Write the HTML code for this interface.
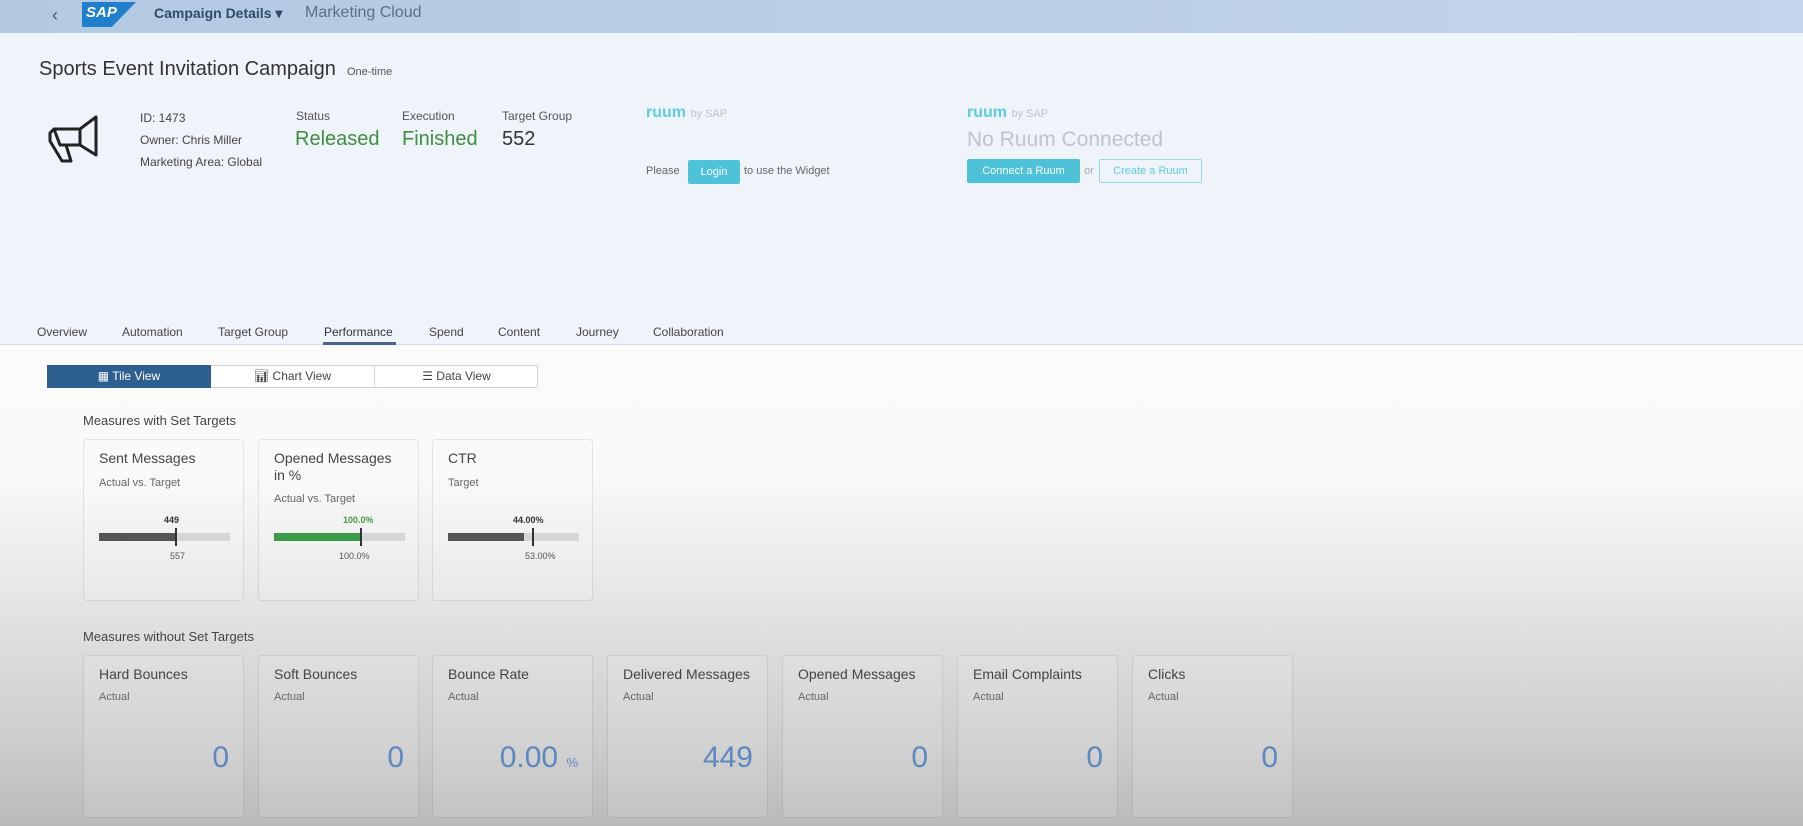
<!DOCTYPE html>
<html><head><meta charset="utf-8"><style>
*{margin:0;padding:0;box-sizing:border-box}
body{width:1803px;height:826px;overflow:hidden;font-family:"Liberation Sans",sans-serif;color:#333;position:relative;
background:linear-gradient(to bottom,#eff3fa 0,#eff3fa 345px,#fbfbfb 346px,#fafafa 470px,#ececec 560px,#dcdcdc 650px,#cdcdcd 740px,#bababa 826px)}
.a{position:absolute;white-space:nowrap}
.hdr{position:absolute;left:0;top:0;width:1803px;height:33px;background:linear-gradient(to right,#b3c9e2,#bcd0e6 60%,#c3d5ea)}
.card{position:absolute;border:1px solid rgba(0,0,0,0.09);border-radius:4px;background:rgba(255,255,255,0.12);width:161px}
.ct{position:absolute;left:15px;top:10px;font-size:14px;color:#444;line-height:17px}
.cs{position:absolute;left:15px;font-size:11px;color:#666}
.num{position:absolute;right:14px;top:85px;font-size:30px;color:#5b88bf}
.btn{position:absolute;font-size:11px;text-align:center;line-height:24px;border-radius:2px}
</style></head><body>
<div class="hdr"></div>
<div class="a" style="left:52px;top:5px;font-size:18px;color:#556">&#8249;</div>
<div class="a" style="left:82px;top:2px;width:54px;height:25px;background:#1f7fcc;clip-path:polygon(0 0,100% 0,55% 100%,0 100%)"></div>
<div class="a" style="left:86px;top:4px;font-size:15px;font-weight:bold;color:#fff;font-style:italic">SAP</div>
<div class="a" style="left:154px;top:5px;font-size:14px;font-weight:bold;color:#2f4a6b">Campaign Details ▾</div>
<div class="a" style="left:305px;top:4px;font-size:16px;color:#5a6f8a">Marketing Cloud</div>

<div class="a" style="left:39px;top:58px;font-size:20px;color:#333">Sports Event Invitation Campaign</div>
<div class="a" style="left:347px;top:66px;font-size:11px;color:#555">One-time</div>

<svg class="a" style="left:46px;top:113px" width="58" height="52" viewBox="0 0 58 52"><path d="M50 4 L50 42 L34 32 L20 32 L25 48 L16 48 L4 28 L4 20 L8 16 L34 16 Z M34 16 L34 32 M8 16 L14 32 L20 32" fill="none" stroke="#222" stroke-width="3" stroke-linejoin="round"/></svg>

<div class="a" style="left:140px;top:111px;font-size:12px;color:#444">ID: 1473</div>
<div class="a" style="left:140px;top:133px;font-size:12px;color:#444">Owner: Chris Miller</div>
<div class="a" style="left:140px;top:155px;font-size:12px;color:#444">Marketing Area: Global</div>
<div class="a" style="left:296px;top:109px;font-size:12px;color:#555">Status</div>
<div class="a" style="left:295px;top:128px;font-size:20px;color:#3f8f3f">Released</div>
<div class="a" style="left:402px;top:109px;font-size:12px;color:#555">Execution</div>
<div class="a" style="left:402px;top:128px;font-size:20px;color:#3f8f3f">Finished</div>
<div class="a" style="left:502px;top:109px;font-size:12px;color:#555">Target Group</div>
<div class="a" style="left:502px;top:128px;font-size:20px;color:#333">552</div>

<div class="a" style="left:646px;top:104px;font-size:16px;font-weight:bold;color:#5ecde0">ruum <span style="font-size:11px;font-weight:normal;color:#b8c4cc">by SAP</span></div>
<div class="a" style="left:646px;top:165px;font-size:11px;color:#666">Please</div>
<div class="btn" style="left:688px;top:160px;width:52px;background:#4dc2d8;color:#fff">Login</div>
<div class="a" style="left:744px;top:165px;font-size:11px;color:#666">to use the Widget</div>

<div class="a" style="left:967px;top:104px;font-size:16px;font-weight:bold;color:#5ecde0">ruum <span style="font-size:11px;font-weight:normal;color:#b8c4cc">by SAP</span></div>
<div class="a" style="left:967px;top:128px;font-size:21px;color:#bfc4ca">No Ruum Connected</div>
<div class="btn" style="left:967px;top:159px;width:113px;background:#4dc2d8;color:#fff">Connect a Ruum</div>
<div class="a" style="left:1084px;top:165px;font-size:11px;color:#aaa">or</div>
<div class="btn" style="left:1099px;top:159px;width:103px;border:1px solid #8fdbe8;color:#5ecde0;line-height:22px">Create a Ruum</div>

<div class="a" style="left:0;top:344px;width:1803px;height:1px;background:#d9dfe8"></div>
<div class="a" style="left:37px;top:325px;font-size:12px;color:#444">Overview</div>
<div class="a" style="left:122px;top:325px;font-size:12px;color:#444">Automation</div>
<div class="a" style="left:218px;top:325px;font-size:12px;color:#444">Target Group</div>
<div class="a" style="left:324px;top:325px;font-size:12px;color:#333">Performance</div>
<div class="a" style="left:323px;top:342px;width:73px;height:3px;background:#49678c"></div>
<div class="a" style="left:429px;top:325px;font-size:12px;color:#444">Spend</div>
<div class="a" style="left:498px;top:325px;font-size:12px;color:#444">Content</div>
<div class="a" style="left:576px;top:325px;font-size:12px;color:#444">Journey</div>
<div class="a" style="left:653px;top:325px;font-size:12px;color:#444">Collaboration</div>

<div class="a" style="left:47px;top:365px;width:491px;height:23px;border:1px solid #d0d4da;background:#fff;border-radius:2px"></div>
<div class="a" style="left:47px;top:365px;width:164px;height:23px;background:#2d5f91;color:#fff;font-size:12px;text-align:center;line-height:23px">▦ Tile View</div>
<div class="a" style="left:211px;top:365px;width:164px;height:23px;border-right:1px solid #d8d8d8;color:#444;font-size:12px;text-align:center;line-height:23px">📊︎ Chart View</div>
<div class="a" style="left:375px;top:365px;width:163px;height:23px;color:#444;font-size:12px;text-align:center;line-height:23px">☰ Data View</div>

<div class="a" style="left:83px;top:413px;font-size:13px;color:#444">Measures with Set Targets</div>

<div class="card" style="left:83px;top:439px;height:162px">
 <div class="ct">Sent Messages</div><div class="cs" style="top:37px">Actual vs. Target</div>
 <div class="a" style="left:80px;top:75px;font-size:9px;font-weight:bold;color:#333">449</div>
 <div class="a" style="left:15px;top:93px;width:131px;height:8px;background:#d6d6d6"></div>
 <div class="a" style="left:15px;top:93px;width:76px;height:8px;background:#555"></div>
 <div class="a" style="left:91px;top:88px;width:2px;height:18px;background:#333"></div>
 <div class="a" style="left:86px;top:111px;font-size:9px;color:#555">557</div>
</div>
<div class="card" style="left:258px;top:439px;height:162px">
 <div class="ct">Opened Messages<br>in %</div><div class="cs" style="top:53px">Actual vs. Target</div>
 <div class="a" style="left:84px;top:75px;font-size:9px;font-weight:bold;color:#3f9a3f">100.0%</div>
 <div class="a" style="left:15px;top:93px;width:131px;height:8px;background:#d6d6d6"></div>
 <div class="a" style="left:15px;top:93px;width:87px;height:8px;background:#3a9a48"></div>
 <div class="a" style="left:101px;top:88px;width:2px;height:18px;background:#333"></div>
 <div class="a" style="left:80px;top:111px;font-size:9px;color:#555">100.0%</div>
</div>
<div class="card" style="left:432px;top:439px;height:162px">
 <div class="ct">CTR</div><div class="cs" style="top:37px">Target</div>
 <div class="a" style="left:80px;top:75px;font-size:9px;font-weight:bold;color:#333">44.00%</div>
 <div class="a" style="left:15px;top:93px;width:131px;height:8px;background:#d6d6d6"></div>
 <div class="a" style="left:15px;top:93px;width:76px;height:8px;background:#555"></div>
 <div class="a" style="left:99px;top:88px;width:2px;height:18px;background:#333"></div>
 <div class="a" style="left:92px;top:111px;font-size:9px;color:#555">53.00%</div>
</div>

<div class="a" style="left:83px;top:629px;font-size:13px;color:#444">Measures without Set Targets</div>

<div class="card" style="left:83px;top:655px;height:163px"><div class="ct">Hard Bounces</div><div class="cs" style="top:35px">Actual</div><div class="num">0</div></div>
<div class="card" style="left:258px;top:655px;height:163px"><div class="ct">Soft Bounces</div><div class="cs" style="top:35px">Actual</div><div class="num">0</div></div>
<div class="card" style="left:432px;top:655px;height:163px"><div class="ct">Bounce Rate</div><div class="cs" style="top:35px">Actual</div><div class="num">0.00 <span style="font-size:13px">%</span></div></div>
<div class="card" style="left:607px;top:655px;height:163px"><div class="ct">Delivered Messages</div><div class="cs" style="top:35px">Actual</div><div class="num">449</div></div>
<div class="card" style="left:782px;top:655px;height:163px"><div class="ct">Opened Messages</div><div class="cs" style="top:35px">Actual</div><div class="num">0</div></div>
<div class="card" style="left:957px;top:655px;height:163px"><div class="ct">Email Complaints</div><div class="cs" style="top:35px">Actual</div><div class="num">0</div></div>
<div class="card" style="left:1132px;top:655px;height:163px"><div class="ct">Clicks</div><div class="cs" style="top:35px">Actual</div><div class="num">0</div></div>
</body></html>
